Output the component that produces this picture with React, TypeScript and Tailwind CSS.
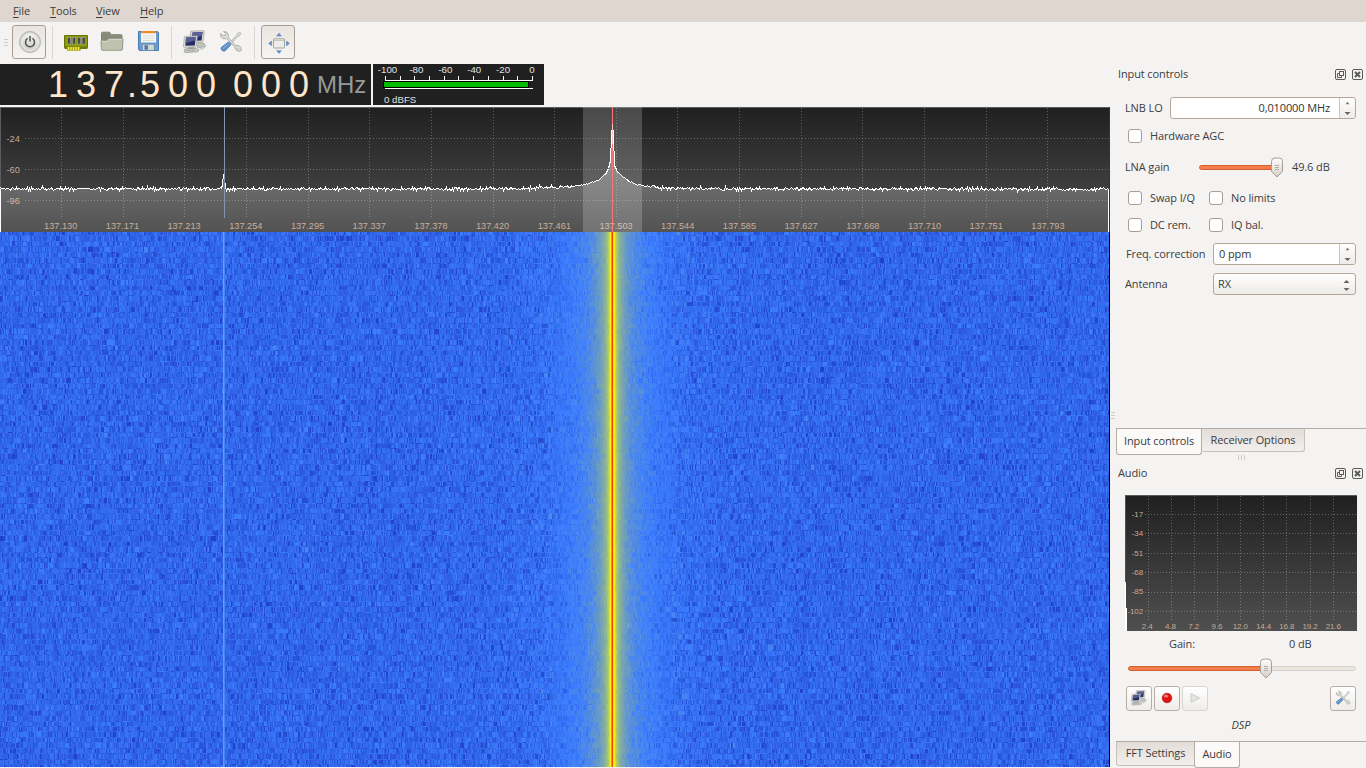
import { useEffect, useRef } from "react";
import type { ReactNode } from "react";

function makeRandom(seed: number) {
  let s = seed;
  return () => {
    s = (s * 1664525 + 1013904223) >>> 0;
    return s / 4294967296;
  };
}

function interpolate(points: number[][], x: number) {
  if (x <= points[0][0]) return points[0][1];
  for (let i = 1; i < points.length; i++) {
    if (x <= points[i][0]) {
      const [x0, y0] = points[i - 1];
      const [x1, y1] = points[i];
      return y0 + ((y1 - y0) * (x - x0)) / (x1 - x0);
    }
  }
  return points[points.length - 1][1];
}

const PEAK = [
  [0, 188.3], [480, 188.3], [530, 187.7], [555, 187], [572, 185.7], [583, 184.7], [594, 181.5], [600, 178],
  [605, 173.5], [608, 168], [610, 160], [611, 136], [612, 124], [613, 135], [614, 165], [617, 171.5], [622, 176],
  [628, 180.5], [636, 184], [645, 185.7], [660, 187.2], [700, 188], [760, 188.3], [1110, 188.7],
];

function tracePath() {
  const rnd = makeRandom(77);
  const pts: string[] = [];
  for (let x = 0; x < 1109; x++) {
    let y = interpolate(PEAK, x);
    const d = Math.abs(x - 612);
    const amp = d < 12 ? 0 : d < 40 ? 0.9 : 2.1;
    y += (rnd() + rnd() - 1) * amp;
    if (x === 222) y = 184;
    if (x === 223) y = 174;
    if (x === 224) y = 178;
    if (x === 225) y = 187;
    pts.push(`${x + 0.5},${(Math.round(y) - 107 + 0.5).toFixed(1)}`);
  }
  return pts.join(" ");
}

const TRACE = tracePath();
const FREQS = ["137.130", "137.171", "137.213", "137.254", "137.295", "137.337", "137.378", "137.420", "137.461", "137.503", "137.544", "137.585", "137.627", "137.668", "137.710", "137.751", "137.793"];

function Spectrum() {
  return (
    <svg width="1110" height="125" viewBox="0 0 1110 125" className="block shrink-0">
      <defs>
        <linearGradient id="plotBg" x1="0" y1="0" x2="0" y2="1">
          <stop offset="0" stopColor="#202020" />
          <stop offset="1" stopColor="#4f4f4f" />
        </linearGradient>
        <linearGradient id="plotFill" gradientUnits="userSpaceOnUse" x1="0" y1="17" x2="0" y2="125">
          <stop offset="0" stopColor="#fff" stopOpacity="0.42" />
          <stop offset="0.6" stopColor="#fff" stopOpacity="0.22" />
          <stop offset="1" stopColor="#fff" stopOpacity="0.02" />
        </linearGradient>
      </defs>
      <rect width="1110" height="125" fill="url(#plotBg)" />
      <rect width="1110" height="1" fill="#5a5d5d" />
      <rect width="1" height="125" fill="#5a5d5d" />
      <g stroke="#fff" strokeOpacity="0.27" strokeDasharray="1 2" shapeRendering="crispEdges">
        {FREQS.map((f, i) => {
          const x = Math.round(61.63 * (i + 1) - 0.5) + 0.5;
          return <line key={f} x1={x} x2={x} y1="1" y2="111" />;
        })}
        {[31.5, 62.5, 93.5].map((y) => (
          <line key={y} x1="25" x2="1109" y1={y} y2={y} />
        ))}
      </g>
      <g fill="#c6ab96" fontFamily="Liberation Sans, sans-serif" fontSize="9.2">
        <text x="6.5" y="34.5">-24</text>
        <text x="6.5" y="65.5">-60</text>
        <text x="6.5" y="96.5">-96</text>
        {FREQS.map((f, i) => (
          <text key={f} x={61.7 * (i + 1) - 1} y="122.3" textAnchor="middle">{f}</text>
        ))}
      </g>
      <polygon points={`0,125 ${TRACE} 1109,125`} fill="url(#plotFill)" />
      <rect x="583" y="0" width="59" height="125" fill="#fff" fillOpacity="0.19" />
      <polyline points={TRACE} fill="none" stroke="#fff" strokeWidth="1" shapeRendering="crispEdges" />
      <rect x="0" y="82" width="1" height="43" fill="#fff" />
      <rect x="1108" y="82" width="1" height="43" fill="#fff" />
      <rect x="224" y="0" width="1" height="111" fill="#8094b4" />
      <rect x="612" y="0" width="1" height="17" fill="#ff7474" />
      <rect x="612" y="17" width="1" height="20" fill="#ffc4c4" />
      <rect x="612" y="37" width="1" height="88" fill="#ff7474" />
      <rect x="1109" width="1" height="125" fill="#333" />
    </svg>
  );
}

function palette(i: number): [number, number, number] {
  if (i < 70) return [0, 0, (140 * (i - 20)) / 50];
  if (i < 100) return [(60 * (i - 70)) / 30, (125 * (i - 70)) / 30, (115 * (i - 70)) / 30 + 140];
  if (i < 150) return [(195 * (i - 100)) / 50 + 60, (130 * (i - 100)) / 50 + 125, 255 - (255 * (i - 100)) / 50];
  return [255, 255 - (255 * (i - 150)) / 100, 0];
}

const LEVELS = [
  [0, 228], [1, 157], [2, 146], [3, 138], [4, 131], [6, 123], [9, 117], [13, 111.5], [18, 107.5], [25, 104],
  [35, 101], [50, 98.5], [75, 96.5], [110, 95.3], [200, 94.6], [1000, 94.4],
];

function Waterfall() {
  const ref = useRef<HTMLCanvasElement>(null);
  useEffect(() => {
    const ctx = ref.current?.getContext("2d");
    if (!ctx) return;
    const W = 1109;
    const H = 535;
    const img = ctx.createImageData(W, H);
    const rnd = makeRandom(4242);
    const makeRow = () => {
      const row: number[][] = [];
      let prev = 0;
      for (let x = 0; x < W; x++) {
        const d = Math.abs(x - 612);
        const amp = d < 3 ? 0.5 : d < 14 ? 1.4 : d < 60 ? 2.8 : 4.3;
        const g = -Math.log(rnd() + 0.001) - Math.log(rnd() + 0.001) - Math.log(rnd() + 0.001);
        let n = Math.max(-2.6, Math.log(g / 2.7) * 1.7);
        if (rnd() < 0.25) n = prev;
        prev = n;
        let lv = interpolate(LEVELS, d) + n * amp * 0.75;
        if (x === 611) lv = 192;
        if (x === 223) lv = 113 + n;
        if (x === 224) lv = Math.max(lv, 103);
        row.push(palette(lv));
      }
      return row;
    };
    let row = makeRow();
    let next = 3;
    let thin = false;
    for (let y = 0; y < H; y++) {
      if (thin) {
        row = makeRow();
        thin = false;
      } else if (y >= next) {
        row = makeRow();
        thin = true;
        next += 5.45;
      }
      for (let x = 0; x < W; x++) {
        const o = (y * W + x) * 4;
        img.data[o] = row[x][0];
        img.data[o + 1] = row[x][1];
        img.data[o + 2] = row[x][2];
        img.data[o + 3] = 255;
      }
    }
    ctx.putImageData(img, 0, 0);
  }, []);
  return (
    <div className="h-[535px] w-[1110px] shrink-0 border-r border-black bg-[#2b62e8]">
      <canvas ref={ref} width={1109} height={535} className="block" />
    </div>
  );
}

function Frequency() {
  const cell = "w-[28px] text-center";
  return (
    <div className="flex h-[41px] w-[371px] items-center bg-[#202020] pl-[44px] font-['Liberation_Sans',sans-serif] text-[36px] leading-[41px] text-[#ffe6c8]">
      <span className={cell}>1</span>
      <span className={cell}>3</span>
      <span className={cell}>7</span>
      <span className="flex w-[8px] justify-center">.</span>
      <span className={cell}>5</span>
      <span className={cell}>0</span>
      <span className={cell}>0</span>
      <span className="w-[9px]" />
      <span className={cell}>0</span>
      <span className={cell}>0</span>
      <span className={cell}>0</span>
      <span className="ml-[4px] text-[24px] text-[#999]">MHz</span>
    </div>
  );
}

function Meter() {
  return (
    <svg width="171" height="41" viewBox="0 0 171 41" className="block">
      <rect width="171" height="41" fill="#202020" />
      <g fill="#e0e0e0" fontFamily="Liberation Sans, sans-serif" fontSize="9.7" textAnchor="middle">
        {["-100", "-80", "-60", "-40", "-20", "0"].map((t, i) => (
          <text key={t} x={14.5 + 28.9 * i} y="9.2">{t}</text>
        ))}
        <text x="11" y="39" textAnchor="start">0 dBFS</text>
      </g>
      <g fill="#fff">
        <rect x="12" y="16" width="148" height="1" />
        <rect x="12" y="24" width="148" height="1" />
        {[12, 27, 41, 56, 71, 85, 100, 115, 130, 144, 159].map((x) => (
          <rect key={x} x={x} y="12" width="1" height="4" />
        ))}
      </g>
      <rect x="10" y="17" width="146" height="7" fill="#000" />
      <rect x="11" y="18" width="144" height="5" fill="#00bb00" />
    </svg>
  );
}

function PowerIcon() {
  return (
    <svg width="24" height="24" viewBox="0 0 24 24" className="ml-px">
      <defs>
        <linearGradient id="knob" x1="0" y1="0" x2="0" y2="1">
          <stop offset="0" stopColor="#efefed" />
          <stop offset="1" stopColor="#cfcfcc" />
        </linearGradient>
      </defs>
      <circle cx="12" cy="12" r="10.6" fill="#d0d0cd" stroke="#b0b0ad" strokeWidth="0.8" />
      <circle cx="12" cy="12" r="8.3" fill="url(#knob)" stroke="#f4f4f2" strokeWidth="0.8" />
      <path d="M9.6 8.4a4.5 4.5 0 1 0 4.8 0" fill="none" stroke="#555753" strokeWidth="1.5" />
      <path d="M12 6v5.5" stroke="#555753" strokeWidth="1.5" />
    </svg>
  );
}

function MemoryIcon() {
  return (
    <svg width="24" height="24" viewBox="0 0 24 24">
      <path d="M.5 5.5h23v12h-23z" fill="#8c9a0a" stroke="#66750a" />
      <path d="M.5 16.5h23v2.5h-7v1.5H3V19H.5z" fill="#6b7a08" />
      <g fill="#474c4a" stroke="#a9ad9a" strokeWidth="0.6">
        <rect x="3.3" y="7.3" width="3.4" height="6.8" />
        <rect x="8.3" y="7.3" width="3.4" height="6.8" />
        <rect x="13.3" y="7.3" width="3.4" height="6.8" />
        <rect x="18.1" y="7.3" width="3.4" height="6.8" />
      </g>
      <path d="M3 17h13v3.5H3z" fill="#98a50a" />
      <path d="M4.5 17v3.5M7 17v3.5M9.5 17v3.5M12 17v3.5M14.5 17v3.5" stroke="#fce94f" strokeWidth="1.3" />
    </svg>
  );
}

function FolderIcon() {
  return (
    <svg width="24" height="24" viewBox="0 0 24 24">
      <path d="M1.5 18V3.2q0-1 1-1h6.6q.7 0 1.1.8l1 1.7h9.8q1 0 1 1V18z" fill="#8f947f" stroke="#7d8174" />
      <path d="M2 10V3.5h7l1.4 2.6h10.6V10z" fill="#868b77" />
      <path d="M1 11.6q0-1 1-1h5l1.6-2h13.4q1 0 1 1l-.6 9.8q0 .9-1 .9H2.4q-.9 0-.9-.9z" fill="#bfc2ae" stroke="#969a8b" />
      <path d="M2 12V11.5h5.5l1.6-2h12.9" fill="none" stroke="#dcddcf" strokeWidth="0.8" />
    </svg>
  );
}

function FloppyIcon() {
  return (
    <svg width="24" height="24" viewBox="0 0 24 24">
      <path d="M2.5 1.5h19l1 1v18h-19l-1-1z" fill="#6a9ad0" stroke="#4c7bb4" />
      <path d="M5 1h15v11.5H5z" fill="#f6f6f5" />
      <path d="M5 1h15v2.2H5z" fill="#f08a25" />
      <path d="M6.5 6h12M6.5 8.3h12M6.5 10.5h12" stroke="#d3d7cf" strokeWidth="0.8" />
      <path d="M6.3 14.2h12v6.3h-12z" fill="#d3d7cf" stroke="#4c78ae" strokeWidth="0.6" />
      <path d="M8.5 15.2h3.4v4.5H8.5z" fill="#4a75ad" />
    </svg>
  );
}

function MonitorsIcon({ size }: { size: number }) {
  return (
    <svg width={size} height={size} viewBox="0 0 24 24">
      <path d="M15 12.5l6 .8 1.8 2.2-1 1.5-7.5.5z" fill="#c3c5bf" stroke="#96988f" strokeWidth="0.6" />
      <path d="M7.8 1.2l12.7-.5q.8 0 .7.8l-1.3 10q0 .6-.8.7l-12 .6z" fill="#dcddd8" stroke="#999b95" strokeWidth="0.7" />
      <path d="M9.5 2.5l10-.4-1 8.5-9.4.5z" fill="#2a2f6a" />
      <path d="M9.5 2.5l10-.4-.5 3.6-9.4 2.8z" fill="#5c6295" />
      <path d="M5 16.8h6.2v2.3H5z" fill="#a3a59f" />
      <path d="M2.2 6.4l11.4-.4q.8 0 .7.8l-1.1 9.4q-.1.7-.8.7l-11.2.4q-.7 0-.7-.7l.9-9.5q.1-.7.8-.7z" fill="#e1e2de" stroke="#999b95" strokeWidth="0.7" />
      <path d="M3 7.6l9.7-.4-.9 8.2-9.5.4z" fill="#262b66" />
      <path d="M3 7.6l9.7-.4-.4 3.4-9.6 2.7z" fill="#575d91" />
      <path d="M2 18.9l11.2-.7 2.8 1.6-1.2 2-12.5.7-1.3-1.1z" fill="#cfd1cc" stroke="#8a8c85" strokeWidth="0.7" />
      <path d="M3.2 20.6l9.5-.6" stroke="#81837c" strokeWidth="0.8" strokeDasharray="1.3 .5" />
      <path d="M16.5 18l4-1.6 1.2 1.1-3.2 2z" fill="#d8dad5" stroke="#999b95" strokeWidth="0.5" />
    </svg>
  );
}

function ToolsIcon({ size }: { size: number }) {
  return (
    <svg width={size} height={size} viewBox="0 0 24 24">
      <path d="M20.6 2.1l1 1-.8 2.3-2 1.1-7.2 7.6-1.1-1.1 7.1-7.5.9-2z" fill="#e5e6e2" stroke="#989a94" strokeWidth="0.7" />
      <path d="M4.6 1.5l3.1.7 1.7 2.6-.4 2.6 8.2 8.4 2.7-.3 2 2 .4 2.7-1.8 1.2-3-1.1-1.8-3.4-8.3-8.3-2.9.2-2.6-2.1-.2-3.1 2.7 2.2 2-.4.2-1.9z" fill="#dfe0dc" stroke="#989a94" strokeWidth="0.8" />
      <circle cx="18.9" cy="19" r="1" fill="#f8f8f6" stroke="#989a94" strokeWidth="0.5" />
      <path d="M9.4 12.1l2.6 2.4-5.8 6.3q-1.6 1.2-3.4-.6-1.5-1.6-.3-3z" fill="#5e93cc" stroke="#4373ad" strokeWidth="0.8" />
      <path d="M9 14l-5 4.6" stroke="#8fb7e0" strokeWidth="1" />
    </svg>
  );
}

function FullscreenIcon() {
  return (
    <svg width="24" height="24" viewBox="0 0 24 24" className="mt-px ml-[2px]">
      <rect x="6.5" y="8" width="11" height="9" rx="0.8" fill="#ececea" stroke="#a3a59f" />
      <path d="M6.5 8h11v1.3h-11z" fill="#fff" stroke="#979992" strokeWidth="0.6" />
      <g fill="#5f90ca" stroke="#4a79b3" strokeWidth="0.5">
        <path d="M12 2.2l2.3 2.9H9.7z" />
        <path d="M12 22.4l2.3-2.7H9.7z" />
        <path d="M1.7 12.4l2.8-2.3v4.6z" />
        <path d="M22.3 12.4l-2.8-2.3v4.6z" />
      </g>
    </svg>
  );
}

function Separator() {
  return <div className="h-[33px] w-px bg-[#d9d5d1]" />;
}

function ToolButton({ children }: { children: ReactNode }) {
  return (
    <div className="flex h-[34px] w-[34px] items-center justify-center rounded-[3px] border border-[#a99d93] bg-linear-to-b from-[#e9e4df] to-[#f6f4f2]">
      {children}
    </div>
  );
}

function Toolbar() {
  return (
    <div className="flex h-[42px] shrink-0 items-center bg-[#f5f3f2] pb-[2px] pl-[4px]">
      <div className="flex w-[8px] flex-col gap-[2px]">
        <i className="h-px w-[4px] bg-[#cfcbc7]" />
        <i className="h-px w-[4px] bg-[#cfcbc7]" />
        <i className="h-px w-[4px] bg-[#cfcbc7]" />
      </div>
      <ToolButton><PowerIcon /></ToolButton>
      <div className="w-[6px]" />
      <Separator />
      <div className="ml-[11px] flex gap-[12px]">
        <MemoryIcon />
        <FolderIcon />
        <FloppyIcon />
      </div>
      <div className="w-[11px]" />
      <Separator />
      <div className="ml-[11px] flex gap-[12px]">
        <MonitorsIcon size={24} />
        <ToolsIcon size={24} />
      </div>
      <div className="w-[11px]" />
      <Separator />
      <div className="w-[6px]" />
      <ToolButton><FullscreenIcon /></ToolButton>
    </div>
  );
}

function MenuItem({ text, className }: { text: string; className: string }) {
  return (
    <span className={className}>
      <span className="underline underline-offset-2">{text[0]}</span>
      {text.slice(1)}
    </span>
  );
}

function DockTitle({ text }: { text: string }) {
  return (
    <div className="flex h-[20px] items-center pl-[2px] pr-[3px]">
      <span className="flex-1">{text}</span>
      <svg width="11" height="11" viewBox="0 0 11 11" fill="none" stroke="#5a5a58">
        <rect x="0.5" y="0.5" width="10" height="10" rx="1.5" />
        <rect x="4.5" y="2.5" width="4" height="4" />
        <path d="M4 4.5H2.5v4h4V7" />
      </svg>
      <svg width="11" height="11" viewBox="0 0 11 11" fill="none" stroke="#5a5a58" className="ml-[6px]">
        <rect x="0.5" y="0.5" width="10" height="10" rx="1.5" />
        <path d="M3 3l5 5M8 3l-5 5" strokeWidth="2" />
      </svg>
    </div>
  );
}

function Arrows({ faint }: { faint?: boolean }) {
  return (
    <svg width="7" height="16" viewBox="0 0 7 16">
      {faint ? <path d="M1.5 4.2L3.5 1.8l2 2.4z" fill="#777" /> : <path d="M.5 7l3-3 3 3z" fill="#666" />}
      <path d="M.5 12h6l-3 3z" fill="#666" />
    </svg>
  );
}

function SpinBox({ text, className }: { text: string; className: string }) {
  return (
    <div className={`flex h-[22px] items-center rounded-[3px] border border-[#b3a69b] bg-white ${className}`}>
      <span className="flex-1 px-[5px] text-[#333]">{text}</span>
      <div className="flex h-full w-[16px] items-center justify-center rounded-r-[3px] border-l border-[#cdc4bc] bg-linear-to-b from-white to-[#eeebe8]">
        <Arrows faint />
      </div>
    </div>
  );
}

function Check({ text, className }: { text: string; className?: string }) {
  return (
    <div className={`flex items-center ${className ?? ""}`}>
      <div className="h-[14px] w-[14px] rounded-[3px] border border-[#aa9e94] bg-white" />
      <span className="ml-[8px] whitespace-nowrap">{text}</span>
    </div>
  );
}

function Slider({ width, value }: { width: number; value: number }) {
  return (
    <svg width={width} height="22" viewBox={`0 0 ${width} 22`} className="mt-px">
      <defs>
        <linearGradient id="thumb" x1="0" y1="0" x2="0" y2="1">
          <stop offset="0" stopColor="#fff" />
          <stop offset="1" stopColor="#d5cdc6" />
        </linearGradient>
      </defs>
      {width > value + 10 && (
        <rect x="0.5" y="8.5" width={width - 1} height="4" rx="2" fill="#e9e4de" stroke="#d8d1ca" />
      )}
      <rect x="0.5" y="8.5" width={value} height="4" rx="2" fill="#f47d4c" stroke="#d5602f" />
      <path
        d={`M${value - 5.5} 4.5q0-3.5 3.5-3.5h4q3.5 0 3.5 3.5v10l-5.5 5.5l-5.5-5.5z`}
        fill="url(#thumb)"
        stroke="#a99c91"
      />
      <path d={`M${value - 2} 8.5h4M${value - 2} 10.5h4M${value - 2} 12.5h4`} stroke="#a99f97" strokeWidth="0.8" />
    </svg>
  );
}

function AudioPlot() {
  const xs = ["2.4", "4.8", "7.2", "9.6", "12.0", "14.4", "16.8", "19.2", "21.6"];
  const ys = ["-17", "-34", "-51", "-68", "-85", "-102"];
  return (
    <svg width="232" height="136" viewBox="0 0 232 136" className="block">
      <rect width="232" height="136" fill="url(#plotBg)" />
      <rect width="232" height="1" fill="#5a5d5d" />
      <rect width="1" height="87" fill="#4d504d" />
      <g stroke="#fff" strokeOpacity="0.27" strokeDasharray="1 2" shapeRendering="crispEdges">
        {xs.map((t, i) => {
          const x = Math.round(23.15 * (i + 1) - 0.6) + 0.5;
          return <line key={t} x1={x} x2={x} y1="1" y2="126" />;
        })}
        {ys.map((t, i) => {
          const y = Math.round(19.4 * (i + 1) - 0.4) + 0.5;
          return <line key={t} x1="20" x2="232" y1={y} y2={y} />;
        })}
      </g>
      <g fill="#c6ab96" fontFamily="Liberation Sans, sans-serif" fontSize="8">
        {ys.map((t, i) => (
          <text key={t} x={18} y={19.4 * (i + 1) + 2.4} textAnchor="end">{t}</text>
        ))}
        {xs.map((t, i) => (
          <text key={t} x={23.25 * (i + 1) - 1} y="134" textAnchor="middle">{t}</text>
        ))}
      </g>
      <rect y="87" width="1" height="49" fill="#fff" />
      <rect x="1" y="113" width="1" height="23" fill="#fff" />
    </svg>
  );
}

function SmallButton({ children, className }: { children: ReactNode; className?: string }) {
  return (
    <div className={`flex h-[25px] w-[26px] items-center justify-center rounded-[3px] border bg-linear-to-b from-white to-[#efecea] pb-px ${className ?? "border-[#b9aea5]"}`}>
      {children}
    </div>
  );
}

function RightPanel() {
  return (
    <div className="flex w-[250px] flex-col">
      <DockTitle text="Input controls" />
      <div className="mt-[13px] flex h-[22px] items-center pl-[9px]">
        <span className="w-[45px]">LNB LO</span>
        <SpinBox text="0,010000 MHz" className="w-[186px] pr-0 text-right [&>span]:pr-[9px]" />
      </div>
      <Check text="Hardware AGC" className="mt-[7px] h-[20px] pl-[12px]" />
      <div className="mt-[10px] flex h-[22px] items-center pl-[9px]">
        <span className="w-[74px]">LNA gain</span>
        <Slider width={84} value={78} />
        <span className="ml-[9px]">49.6 dB</span>
      </div>
      <div className="mt-[9px] flex h-[22px] items-center pl-[12px]">
        <Check text="Swap I/Q" className="w-[81px]" />
        <Check text="No limits" />
      </div>
      <div className="mt-[5px] flex h-[22px] items-center pl-[12px]">
        <Check text="DC rem." className="w-[81px]" />
        <Check text="IQ bal." />
      </div>
      <div className="mt-[7px] flex h-[22px] items-center pl-[10px]">
        <span className="w-[87px] whitespace-nowrap">Freq. correction</span>
        <SpinBox text="0 ppm" className="w-[143px]" />
      </div>
      <div className="mt-[8px] flex h-[22px] items-center pl-[9px]">
        <span className="w-[88px]">Antenna</span>
        <div className="flex h-[22px] w-[143px] items-center justify-between rounded-[3px] border border-[#b3a69b] bg-linear-to-b from-white to-[#eeebe8] pl-[4px] pr-[5px]">
          <span>RX</span>
          <Arrows />
        </div>
      </div>
      <div className="mt-[133px] flex h-[26px] items-start border-t border-[#b5aca5]">
        <div className="flex h-[26px] w-[86px] items-center justify-center rounded-b-[3px] border border-t-0 border-[#b5aca5] bg-[#fbfaf9] pb-[2px]">Input controls</div>
        <div className="flex h-[23px] w-[103px] items-center justify-center rounded-b-[3px] border border-l-0 border-t-0 border-[#c9c0b9] bg-linear-to-b from-[#e3ddd8] to-[#f2efed]">Receiver Options</div>
      </div>
      <div className="mt-[1px] flex h-[5px] justify-center gap-[2px]">
        <i className="w-px bg-[#cfcbc7]" />
        <i className="w-px bg-[#cfcbc7]" />
        <i className="w-px bg-[#cfcbc7]" />
      </div>
      <div className="mt-[3px]">
        <DockTitle text="Audio" />
      </div>
      <div className="mt-[12px] pl-[9px]">
        <AudioPlot />
      </div>
      <div className="mt-[3px] flex h-[20px] items-center pl-[53px]">
        <span className="w-[120px]">Gain:</span>
        <span>0 dB</span>
      </div>
      <div className="mt-[3px] flex h-[22px] items-center pl-[12px]">
        <Slider width={228} value={138} />
      </div>
      <div className="mt-[7px] flex h-[25px] items-center gap-[2px] pl-[10px]">
        <SmallButton><MonitorsIcon size={16} /></SmallButton>
        <SmallButton>
          <svg width="12" height="12" viewBox="0 0 12 12">
            <circle cx="6" cy="6" r="4.8" fill="#dc1414" stroke="#b00d0d" strokeWidth="0.6" />
            <ellipse cx="5" cy="4" rx="2.4" ry="1.5" fill="#f47b7b" />
          </svg>
        </SmallButton>
        <SmallButton className="border-[#d9d4cf]">
          <svg width="12" height="12" viewBox="0 0 12 12">
            <path d="M2 1.5l8.5 4.5L2 10.5z" fill="#e4e4e2" stroke="#cbcbc8" />
          </svg>
        </SmallButton>
        <div className="w-[118px]" />
        <SmallButton><ToolsIcon size={16} /></SmallButton>
      </div>
      <div className="mt-[4px] h-[20px] text-center italic leading-[20px]">DSP</div>
      <div className="mt-[6px] flex h-[27px] items-start border-t border-[#b5aca5]">
        <div className="flex h-[24px] w-[78px] items-center justify-center rounded-bl-[3px] border border-r-0 border-t-0 border-[#c9c0b9] bg-linear-to-b from-[#e3ddd8] to-[#f2efed] pb-px">FFT Settings</div>
        <div className="flex h-[26px] w-[46px] items-center justify-center rounded-b-[3px] border border-t-0 border-[#b5aca5] bg-[#fbfaf9] pb-[2px]">Audio</div>
      </div>
    </div>
  );
}

export default function App() {
  return (
    <div className="flex h-[768px] w-[1366px] flex-col overflow-hidden bg-[#f5f3f2] font-['Open_Sans','Noto_Sans',sans-serif] text-[11px] leading-[16px] tracking-[-0.12px] text-[#3c3c3c]">
      <div className="flex h-[22px] shrink-0 items-center bg-[#dfd7cf]">
        <MenuItem text="File" className="ml-[13px] w-[37px]" />
        <MenuItem text="Tools" className="w-[46px]" />
        <MenuItem text="View" className="w-[44px]" />
        <MenuItem text="Help" className="" />
      </div>
      <Toolbar />
      <div className="flex h-[704px]">
        <div className="flex w-[1110px] flex-col tracking-normal">
          <div className="flex h-[43px] shrink-0 gap-[2px]">
            <Frequency />
            <Meter />
          </div>
          <Spectrum />
          <Waterfall />
        </div>
        <div className="flex w-[6px] flex-col gap-[2px] pl-px pt-[348px]">
          <i className="h-px w-[4px] bg-[#cfcbc7]" />
          <i className="h-px w-[4px] bg-[#cfcbc7]" />
          <i className="h-px w-[4px] bg-[#cfcbc7]" />
        </div>
        <RightPanel />
      </div>
    </div>
  );
}
